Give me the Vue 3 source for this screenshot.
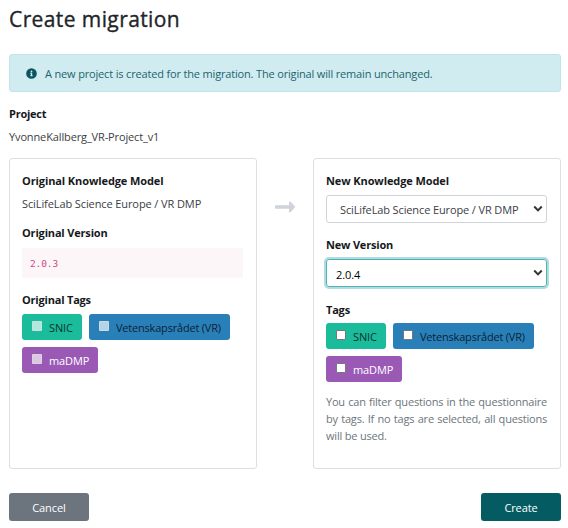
<script setup>
const tags = [
  { name: 'SNIC', tone: 'green' },
  { name: 'Vetenskapsrådet (VR)', tone: 'blue' },
  { name: 'maDMP', tone: 'purple' },
]
</script>

<template>
  <main class="page">
    <h2 class="title"><span>Create migration</span></h2>
    <div class="alert">
      <svg class="info" viewBox="0 0 512 512" aria-hidden="true">
        <path fill="currentColor" fill-rule="evenodd" d="M256 8a248 248 0 1 0 0 496a248 248 0 1 0 0-496zm0 110a42 42 0 1 1 0 84a42 42 0 1 1 0-84zm56 254c0 7-5 12-12 12h-88c-7 0-12-5-12-12v-24c0-7 5-12 12-12h12v-64h-12c-7 0-12-5-12-12v-24c0-7 5-12 12-12h64c7 0 12 5 12 12v100h12c7 0 12 5 12 12z" />
      </svg>
      <span class="alert-text">A new project is created for the migration. The original will remain unchanged.</span>
    </div>
    <div class="label project-label">Project</div>
    <div class="text project-name">YvonneKallberg_VR-Project_v1</div>

    <div class="columns">
      <section class="card">
        <div class="label">Original Knowledge Model</div>
        <div class="text model-name">SciLifeLab Science Europe / VR DMP</div>
        <div class="label version-label">Original Version</div>
        <div class="code">2.0.3</div>
        <div class="label tags-label">Original Tags</div>
        <div class="tags">
          <label v-for="tag in tags" :key="tag.name" class="tag" :class="tag.tone">
            <span class="box disabled"></span><span>{{ tag.name }}</span>
          </label>
        </div>
      </section>

      <div class="arrow">
        <svg viewBox="0 0 20 12" aria-hidden="true">
          <path fill="currentColor" d="M.7 4.2H14V1.4c0-.9 1-1.3 1.6-.7l4 4.4c.5.5.5 1.1 0 1.6l-4 4.5c-.6.6-1.6.2-1.6-.7V7.8H.7C.3 7.8 0 7.5 0 7.1V4.9c0-.4.3-.7.7-.7z" />
        </svg>
      </div>

      <section class="card">
        <div class="label">New Knowledge Model</div>
        <div class="select">
          <span class="text select-model">SciLifeLab Science Europe / VR DMP</span>
          <svg class="chevron" viewBox="0 0 8 6" aria-hidden="true"><path d="M1 1.2 4 4.3 7 1.2" /></svg>
        </div>
        <div class="label new-version-label">New Version</div>
        <div class="select focused">
          <span class="select-version">2.0.4</span>
          <svg class="chevron" viewBox="0 0 8 6" aria-hidden="true"><path d="M1 1.2 4 4.3 7 1.2" /></svg>
        </div>
        <div class="label new-tags-label">Tags</div>
        <div class="tags">
          <label v-for="tag in tags" :key="tag.name" class="tag" :class="tag.tone">
            <span class="box"></span><span>{{ tag.name }}</span>
          </label>
        </div>
        <p class="hint">You can filter questions in the questionnaire by tags. If no tags are selected, all questions will be used.</p>
      </section>
    </div>

    <div class="actions">
      <button class="btn cancel">Cancel</button>
      <button class="btn create">Create</button>
    </div>
  </main>
</template>

<style>
body { background: #fff; }
</style>

<style scoped>
.page {
  box-sizing: border-box;
  width: 568px;
  height: 528px;
  padding: 7px 7px 0 9px;
  overflow: hidden;
  font-family: "Open Sans", "Noto Sans", sans-serif;
  font-size: 11px;
  line-height: 17px;
  letter-spacing: -0.1px;
  color: #212529;
}
.title {
  margin: 0 0 23px;
  font-size: 21px;
  line-height: 24px;
  font-weight: 500;
  letter-spacing: 0.4px;
  -webkit-text-stroke: 0.35px #212529;
}
.alert {
  box-sizing: border-box;
  display: flex;
  align-items: center;
  height: 38px;
  padding-left: 16px;
  border: 1px solid #bee5eb;
  border-radius: 3px;
  background: #d1ecf1;
  color: #23636c;
}
.info { width: 11px; height: 11px; margin-right: 8px; color: #0c5460; }
.alert-text { white-space: nowrap; letter-spacing: -0.165px; }
.label { font-weight: 700; line-height: 17px; color: #16191c; white-space: nowrap; }
.text { white-space: nowrap; color: #3b4045; }
.project-label { margin-top: 13px; letter-spacing: -0.25px; }
.project-name { margin-top: 6px; letter-spacing: -0.13px; }
.columns {
  display: grid;
  grid-template-columns: 248px 56px 248px;
  height: 311px;
  margin-top: 13px;
}
.card {
  box-sizing: border-box;
  border: 1px solid #dfdfdf;
  border-radius: 3px;
  padding: 13px 13px 0 12px;
}
.model-name { margin-top: 6px; }
.version-label { margin-top: 12px; letter-spacing: -0.17px; }
.code {
  box-sizing: border-box;
  height: 30px;
  margin-top: 7px;
  padding-left: 8px;
  line-height: 31px;
  background: #fdf6f8;
  color: #cf4a87;
  font-family: "DejaVu Sans Mono", monospace;
  font-size: 9.5px;
  letter-spacing: -0.1px;
}
.tags-label { margin-top: 13px; letter-spacing: -0.2px; }
.tags { display: flex; flex-wrap: wrap; gap: 7px 6px; margin-top: 6px; }
.tag {
  box-sizing: border-box;
  display: flex;
  align-items: center;
  height: 26px;
  padding: 1px 0 0 10px;
  border-radius: 3px;
  white-space: nowrap;
}
.green { width: 60px; background: #1abc9c; color: #0d332c; }
.blue { width: 141px; margin-left: 1px; background: #2980b9; color: #0b2236; letter-spacing: -0.2px; }
.purple { width: 76px; background: #9b59b6; color: #fff; }
.box {
  box-sizing: border-box;
  width: 10px;
  height: 10px;
  margin: 0 7px 3px 0;
  border: 1px solid #777;
  border-radius: 1px;
  background: #fff;
}
.box.disabled { border-color: rgba(220, 220, 220, .7); background: rgba(255, 255, 255, .65); }
.arrow { display: flex; justify-content: center; padding-top: 43px; color: #ced4da; }
.arrow svg { width: 20px; height: 12px; }
.select {
  box-sizing: border-box;
  display: flex;
  align-items: center;
  justify-content: space-between;
  height: 28px;
  margin-top: 6px;
  padding: 0 4px 0 13px;
  border: 1px solid #ced4da;
  border-radius: 3px;
}
.select-model { letter-spacing: -0.12px; }
.select.focused {
  margin-top: 6px;
  padding-left: 9px;
  border-color: #45b4bb;
  box-shadow: 0 0 0 2px #b3dade;
  color: #000;
}
.select-version { padding-top: 2px; }
.chevron { width: 10px; height: 7.5px; flex: none; margin-right: -1px; }
.chevron path { fill: none; stroke: #333; stroke-width: 1.6; }
.new-version-label { margin-top: 13px; letter-spacing: -0.2px; }
.new-tags-label { margin-top: 14px; letter-spacing: -0.2px; }
.new-tags-label + .tags { margin-top: 5px; }
.hint { margin: 11px 0 0; color: #6c757d; text-align: justify; line-height: 17px; letter-spacing: -0.2px; }
.actions { display: flex; justify-content: space-between; width: 552px; margin-top: 24px; }
.btn {
  width: 80px;
  height: 28px;
  padding: 0;
  border: 0;
  border-radius: 3px;
  color: #fff;
  font: inherit;
  letter-spacing: -0.1px;
}
.cancel { background: #6c757d; }
.create { background: #045c62; }
</style>
